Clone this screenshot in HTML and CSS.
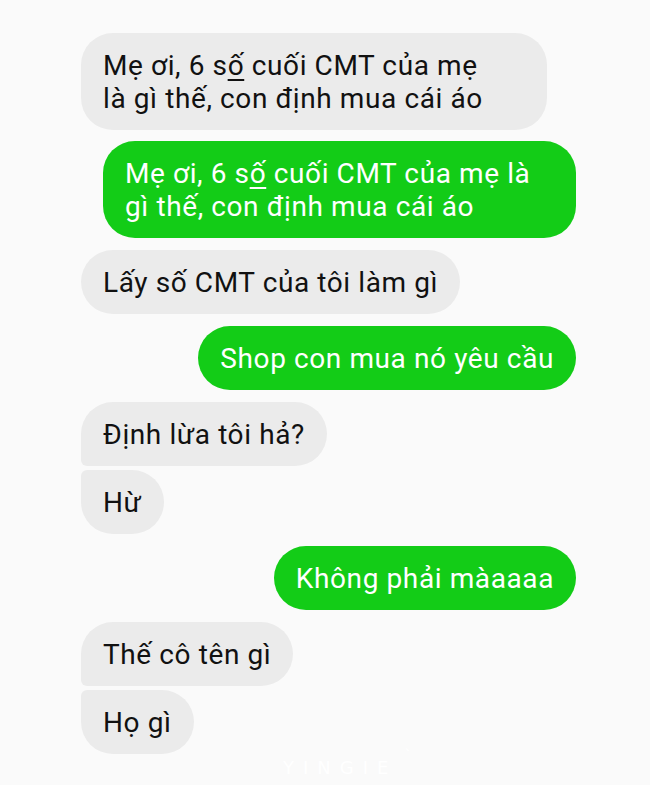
FILE: index.html
```html
<!DOCTYPE html>
<html lang="vi">

<head>
  <meta charset="UTF-8">
  <meta name="viewport" content="width=device-width, initial-scale=1.0">
  <title>Tin nhắn</title>
  <link rel="stylesheet" href="styles.css">
</head>

<body class="chat-body">
  <div class="chat-thread">
    <div class="bubble bubble-in bubble-wide-in">Mẹ ơi, 6 s<u>ố</u> cuối CMT của mẹ<br>là gì thế, con định mua cái áo</div>
    <div class="bubble bubble-out bubble-wide-out">Mẹ ơi, 6 s<u>ố</u> cuối CMT của mẹ là<br>gì thế, con định mua cái áo</div>
    <div class="bubble bubble-in">Lấy số CMT của tôi làm gì</div>
    <div class="bubble bubble-out">Shop con mua nó yêu cầu</div>
    <div class="bubble bubble-in group-first">Định lừa tôi hả?</div>
    <div class="bubble bubble-in group-last">Hừ</div>
    <div class="bubble bubble-out">Không phải màaaaa</div>
    <div class="bubble bubble-in group-first">Thế cô tên gì</div>
    <div class="bubble bubble-in group-last">Họ gì</div>
  </div>
  <div class="watermark">YINGIE<span class="watermark-tick">`</span></div>
</body>

</html>
```

FILE: styles.css
```css
.chat-body {
  margin: 0;
  background-color: #fafafa;
  font-family: Roboto, "Noto Sans", Arial, sans-serif;
  height: 785px;
  overflow: hidden;
  position: relative;
}

.chat-thread {
  display: flex;
  flex-direction: column;
  padding: 33px 74px 0 81px;
}

.bubble {
  font-size: 28px;
  letter-spacing: 0.6px;
  line-height: 33px;
  padding: 15.5px 22px;
  border-radius: 32px;
  margin-bottom: 12px;
  white-space: nowrap;
}

.bubble-wide-in {
  width: 422px;
  margin-bottom: 11px;
}

.bubble-wide-out {
  width: 429px;
}

.bubble u {
  text-underline-offset: 4px;
  text-decoration-thickness: 2px;
}

.bubble-in {
  align-self: flex-start;
  background-color: #ebebeb;
  color: #111;
}

.bubble-out {
  align-self: flex-end;
  background-color: #13cc17;
  color: #fff;
}

.group-first {
  border-bottom-left-radius: 6px;
  margin-bottom: 4px;
}

.group-last {
  border-top-left-radius: 6px;
}

.watermark {
  position: absolute;
  left: 283px;
  top: 757px;
  font-family: "DejaVu Sans", Arial, sans-serif;
  font-size: 18px;
  letter-spacing: 9px;
  color: #ffffff;
}

.watermark-tick {
  position: absolute;
  right: -14px;
  top: -10px;
  font-size: 14px;
  letter-spacing: 0;
}
```
